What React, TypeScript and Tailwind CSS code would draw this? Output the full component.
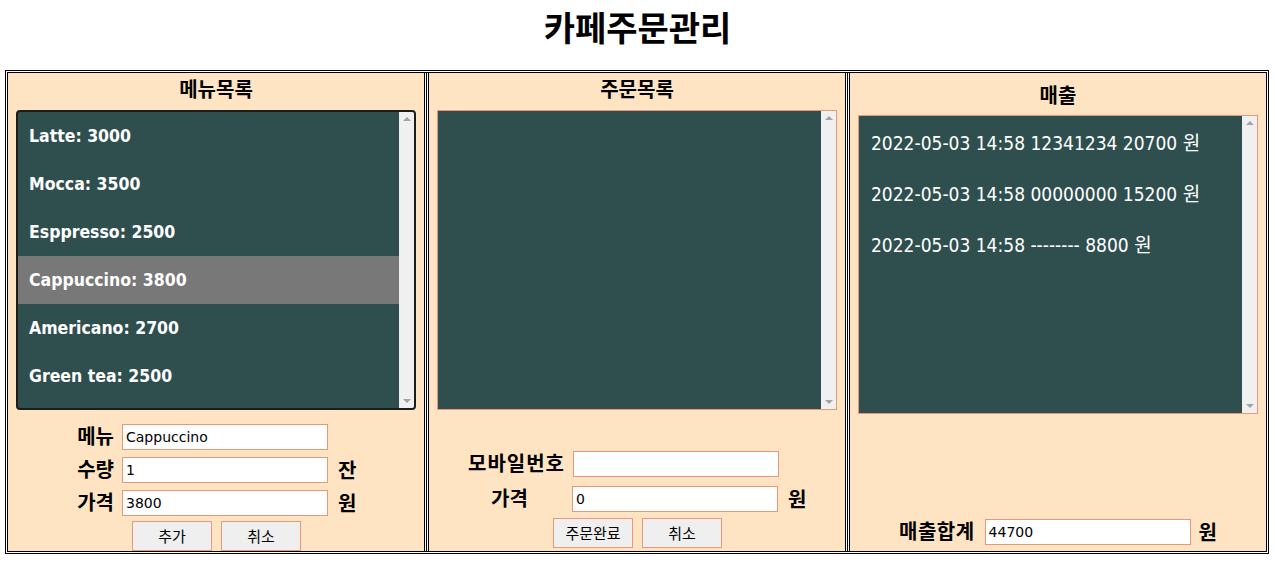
const KR = { fontFamily: '"Noto Sans CJK KR", "Liberation Sans", sans-serif' };
const TXT = { fontFamily: '"DejaVu Sans Condensed", "DejaVu Sans", "Noto Sans CJK KR", sans-serif' };
const INP = { fontFamily: '"DejaVu Sans", "Noto Sans CJK KR", sans-serif' };

const menu = ["Latte: 3000", "Mocca: 3500", "Esppresso: 2500", "Cappuccino: 3800", "Americano: 2700", "Green tea: 2500"];
const sales = [
  "2022-05-03 14:58 12341234 20700 원",
  "2022-05-03 14:58 00000000 15200 원",
  "2022-05-03 14:58 -------- 8800 원",
];

function Scrollbar() {
  return (
    <div className="w-[15px] shrink-0 bg-[#f0f0f0] flex flex-col justify-between items-center py-[5px]">
      <div className="w-0 h-0 border-x-[4px] border-x-transparent border-b-[4px] border-b-[#a3a3a3]" />
      <div className="w-0 h-0 border-x-[4px] border-x-transparent border-t-[4px] border-t-[#a3a3a3]" />
    </div>
  );
}

function Field({ value, className = "" }: { value: string; className?: string }) {
  return (
    <div
      className={`h-[26px] w-[206px] border border-[#e9967a] bg-white flex items-center px-[3px] text-[14px] font-normal text-black ${className}`}
      style={INP}
    >
      {value}
    </div>
  );
}

function Btn({ label }: { label: string }) {
  return (
    <div
      className="h-[30px] w-[80px] border border-[#e9967a] bg-[#efefef] flex items-center justify-center text-[15px] text-black"
      style={KR}
    >
      {label}
    </div>
  );
}

function Divider() {
  return <div className="w-[5px] shrink-0 bg-white border-l-[3px] border-double border-black border-r" />;
}

export default function App() {
  return (
    <div className="w-[1275px] h-[569px] bg-white overflow-hidden">
      <div className="h-[52px] flex items-center justify-center text-[34px] font-bold text-black" style={KR}>
        카페주문관리
      </div>
      <div className="mt-[18px] ml-[5px] w-[1264px] h-[484px] border-[3px] border-double border-black bg-white flex">
        {/* 메뉴목록 */}
        <div className="w-[416px] bg-[#ffe4c4] flex flex-col">
          <div className="h-[31px] flex items-center justify-center text-[20px] font-bold" style={KR}>
            메뉴목록
          </div>
          <div className="mt-[6px] ml-[8px] w-[400px] h-[300px] border-2 border-[#1c1c1c] rounded-[4px] bg-[#2f4f4f] flex overflow-hidden">
            <div className="flex-1 flex flex-col">
              {menu.map((m, i) => (
                <div
                  key={m}
                  className={`h-[48px] shrink-0 flex items-center pl-[11px] text-[17.5px] font-bold text-white ${i === 3 ? "bg-[#787878]" : ""}`}
                  style={TXT}
                >
                  {m}
                </div>
              ))}
            </div>
            <Scrollbar />
          </div>
          <div className="mt-[14px] grid grid-cols-[106px_206px_auto] gap-x-[8px] gap-y-[7px] items-center text-[20px] font-bold" style={KR}>
            <span className="text-right leading-none -mt-[3px]">메뉴</span>
            <Field value="Cappuccino" />
            <span />
            <span className="text-right leading-none -mt-[3px]">수량</span>
            <Field value="1" />
            <span className="leading-none ml-[2px]">잔</span>
            <span className="text-right leading-none -mt-[3px]">가격</span>
            <Field value="3800" />
            <span className="leading-none ml-[2px]">원</span>
          </div>
          <div className="mt-[5px] ml-[124px] flex gap-[9px]">
            <Btn label="추가" />
            <Btn label="취소" />
          </div>
        </div>
        <Divider />
        {/* 주문목록 */}
        <div className="w-[416px] bg-[#ffe4c4] flex flex-col">
          <div className="h-[31px] flex items-center justify-center text-[20px] font-bold" style={KR}>
            주문목록
          </div>
          <div className="mt-[6px] ml-[8px] w-[400px] h-[300px] border border-[#e9967a] bg-[#2f4f4f] flex">
            <div className="flex-1" />
            <Scrollbar />
          </div>
          <div className="mt-[41px] grid grid-cols-[136px_206px_auto] gap-x-[8px] gap-y-[9px] items-center text-[20px] font-bold" style={KR}>
            <span className="text-right leading-none -mt-[3px] tracking-[1px]">모바일번호</span>
            <Field value="" />
            <span />
            <span className="leading-none pl-[62px] -mt-[3px]">가격</span>
            <Field value="0" className="-ml-[1px]" />
            <span className="leading-none ml-[1px]">원</span>
          </div>
          <div className="mt-[6px] ml-[124px] flex gap-[9px]">
            <Btn label="주문완료" />
            <Btn label="취소" />
          </div>
        </div>
        <Divider />
        {/* 매출 */}
        <div className="w-[416px] bg-[#ffe4c4] flex flex-col">
          <div className="h-[42px] pt-[2px] flex items-center justify-center text-[20px] font-bold" style={KR}>
            매출
          </div>
          <div className="ml-[8px] w-[400px] h-[299px] border border-[#e9967a] bg-[#2f4f4f] flex">
            <div className="flex-1 flex flex-col pt-[2px]">
              {sales.map((s) => (
                <div key={s} className="h-[51px] flex items-center pl-[12px] text-[19px] text-white" style={TXT}>
                  {s}
                </div>
              ))}
            </div>
            <Scrollbar />
          </div>
          <div className="mt-[105px] flex items-center justify-start pl-[49px] text-[20px] font-bold" style={KR}>
            <span className="leading-none -mt-[3px] tracking-[0.5px]">매출합계</span>
            <Field value="44700" className="ml-[10px]" />
            <span className="leading-none ml-[8px]">원</span>
          </div>
        </div>
      </div>
    </div>
  );
}
